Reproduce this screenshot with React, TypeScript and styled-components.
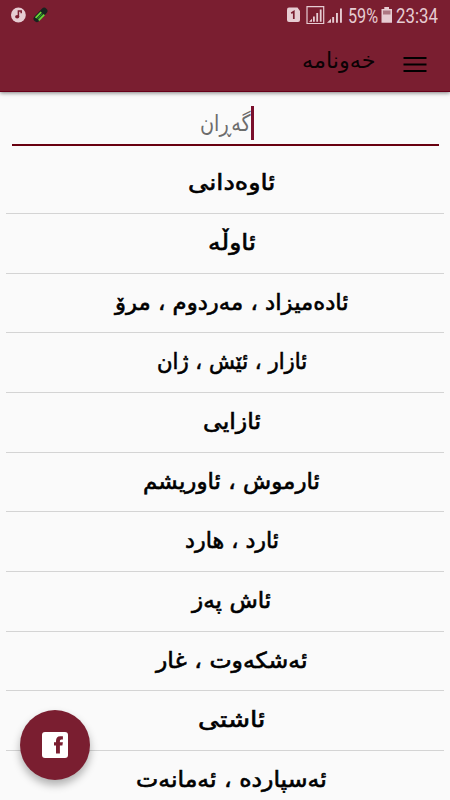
import React, { useLayoutEffect, useRef, useState } from "react";
import styled, { createGlobalStyle } from "styled-components";

const WINE = "#7a1e30";
const PINK = "#e6ccd2";

const GlobalStyle = createGlobalStyle`
  * { box-sizing: border-box; }
  body { margin: 0; background: #fafafa; overflow: hidden; }
`;

const Screen = styled.main`
  position: relative;
  width: 450px;
  height: 800px;
  overflow: hidden;
  background: #fafafa;
  font-family: "DejaVu Sans", sans-serif;
`;

const Header = styled.header`
  height: 92px;
  background: ${WINE};
  border-bottom: 1px solid #68001a;
  box-shadow: 0 1px 4px rgba(0, 0, 0, 0.5);
`;

const StatusBar = styled.div`
  display: flex;
  justify-content: space-between;
  height: 32px;
  padding: 0 12px 0 10px;
  color: ${PINK};
`;

const StatusIcons = styled.svg`
  display: block;
  height: 32px;
`;

const StatusGroup = styled.div`
  display: flex;
  direction: ltr;
`;

const StatusText = styled.span<{ $width: number }>`
  display: flex;
  width: ${(p) => p.$width}px;
  font: 400 20px/32px Roboto, sans-serif;
`;

const Toolbar = styled.div`
  display: flex;
  justify-content: flex-end;
  height: 59px;
  padding-right: 23px;
`;

const Title = styled.h1`
  display: flex;
  width: 73px;
  margin: 0 28px 0 0;
  font-size: 22px;
  font-weight: 400;
  line-height: 57px;
  color: #0b0204;
`;

const MenuButton = styled.button`
  width: 24px;
  height: 59px;
  padding: 0;
  border: 0;
  background: none;
`;

const SearchField = styled.div`
  display: flex;
  justify-content: flex-end;
  height: 54px;
  margin: 0 11.5px;
  padding: 14px 185px 0 0;
  border-bottom: 2px solid #68000f;
`;

const Placeholder = styled.span`
  display: flex;
  width: 51px;
  color: #6c6c6c;
  font-size: 23px;
  line-height: 34px;
`;

const Caret = styled.i`
  width: 2.5px;
  height: 34px;
  background: #7a0f2c;
`;

const List = styled.ul`
  margin: 0 6px;
  padding: 8.4px 0 0;
  list-style: none;
`;

const Row = styled.li`
  display: flex;
  justify-content: center;
  height: 59.65px;
  border-bottom: 1px solid #d4d4d4;
  color: #000;
  font-size: 22px;
  font-weight: 400;
  line-height: 58px;
  -webkit-text-stroke: 0.6px #000;
`;

const RowLabel = styled.span<{ $width: number; $shift: number }>`
  display: flex;
  width: ${(p) => p.$width}px;
  margin-left: ${(p) => p.$shift}px;
`;

const FitText = styled.span`
  display: block;
  flex: none;
  transform-origin: 0 50%;
  white-space: nowrap;
`;

const FacebookButton = styled.button`
  position: absolute;
  left: 20px;
  top: 710px;
  display: grid;
  place-items: center;
  width: 70px;
  height: 70px;
  padding: 0;
  border: 0;
  border-radius: 50%;
  background: ${WINE};
  box-shadow: 0 5px 9px rgba(0, 0, 0, 0.3);
`;

/** Scales a run of text horizontally so that it fills its container. */
function Fit({ children, rtl = true }: { children: string; rtl?: boolean }) {
  const ref = useRef<HTMLSpanElement>(null);
  const [scale, setScale] = useState(1);
  useLayoutEffect(() => {
    const el = ref.current;
    if (el && el.parentElement) setScale(el.parentElement.clientWidth / el.offsetWidth);
  }, [children]);
  return (
    <FitText ref={ref} dir={rtl ? "rtl" : "ltr"} style={{ transform: `scaleX(${scale})` }}>
      {children}
    </FitText>
  );
}

const entries = [
  { text: "ئاوەدانی", width: 87, shift: 12 },
  { text: "ئاوڵە", width: 48, shift: 13 },
  { text: "ئادەمیزاد ، مەردوم ، مرۆ", width: 234, shift: 13 },
  { text: "ئازار ، ئێش ، ژان", width: 150, shift: 13 },
  { text: "ئازایی", width: 58, shift: 13 },
  { text: "ئارموش ، ئاوریشم", width: 177, shift: 13 },
  { text: "ئارد ، هارد", width: 94, shift: 13 },
  { text: "ئاش پەز", width: 79, shift: 13 },
  { text: "ئەشکەوت ، غار", width: 152, shift: 13 },
  { text: "ئاشتی", width: 67, shift: 12 },
  { text: "ئەسپاردە ، ئەمانەت", width: 191, shift: 13 },
];

export default function App() {
  return (
    <Screen>
      <GlobalStyle />
      <Header>
        <StatusBar>
          <StatusIcons width="44" viewBox="10 0 44 32">
            <circle cx="18.4" cy="15" r="7.4" fill={PINK} />
            <ellipse cx="17.2" cy="16.8" rx="2.1" ry="1.7" fill={WINE} />
            <path d="M18.4 17V11h2.8v2.2" fill="none" stroke={WINE} strokeWidth="1.5" />
            <path d="M36.8 18.8 44.2 11" stroke="#18231f" strokeWidth="6.4" strokeLinecap="round" />
            <path d="m35.6 17.8 5.6-5.7M38.7 20.4l5.6-5.7" stroke="#6bd835" strokeWidth="1.8" />
            <path d="m37.4 18.8 5-5.2" stroke="#2c8430" strokeWidth="1.2" />
          </StatusIcons>
          <StatusGroup>
            <StatusIcons width="61" viewBox="287 0 61 32" fill={PINK}>
              <path d="M289 7.5h8.5L300 11v9q0 2-2 2h-9q-2 0-2-2V9.500q0-2 2-2Z" />
              <path d="M291.2 13.2 293.8 11.5V19" fill="none" stroke={WINE} strokeWidth="1.7" />
              <path d="M307 6.700h16.700v16.800H307z" fill="none" stroke={PINK} strokeWidth="1.2" />
              <path d="M309 21.700l3-3v3zM313 16.500h1.800v5.200H313zM316.300 13h1.800v8.700h-1.800zM319.800 9.500h1.800v12.200h-1.800z" />
              <path d="M327 22.700l4-4v4zM332.200 17h1.900v5.700h-1.900zM336 13h1.900v9.700H336zM340 8.500h1.900v14.200H340z" />
            </StatusIcons>
            <StatusText $width={30}><Fit rtl={false}>59%</Fit></StatusText>
            <StatusIcons width="18" viewBox="378 0 18 32">
              <path d="M384.300 7h4.700v2h3v13.700h-10.500V9h2.800z" fill={PINK} />
              <path d="M383 10.500h7.500v4H383z" fill="#ad7782" />
            </StatusIcons>
            <StatusText $width={42}><Fit rtl={false}>23:34</Fit></StatusText>
          </StatusGroup>
        </StatusBar>
        <Toolbar>
          <Title><Fit>خەونامە</Fit></Title>
          <MenuButton aria-label="Menu">
            <svg width="24" height="59" viewBox="403 32 24 59">
              <path d="M403.5 58h23M403.5 64.5h23M403.5 71h23" stroke="#000" strokeWidth="2" />
            </svg>
          </MenuButton>
        </Toolbar>
      </Header>
      <SearchField>
        <Placeholder><Fit>گەڕان</Fit></Placeholder>
        <Caret />
      </SearchField>
      <List>
        {entries.map((e) => (
          <Row key={e.text}>
            <RowLabel $width={e.width} $shift={e.shift}><Fit>{e.text}</Fit></RowLabel>
          </Row>
        ))}
      </List>
      <FacebookButton aria-label="Facebook">
        <svg width="26" height="26" viewBox="0 0 26 26">
          <rect width="26" height="26" rx="3" fill="#fff" />
          <path d="M14 21.500v-8h-2v-3.300h2V9q0-4.700 4.200-4.700h2.700v3.200h-1.700q-1.300 0-1.300 1.600v1.100h3l-.5 3.300h-2.500v8z" fill={WINE} />
        </svg>
      </FacebookButton>
    </Screen>
  );
}
